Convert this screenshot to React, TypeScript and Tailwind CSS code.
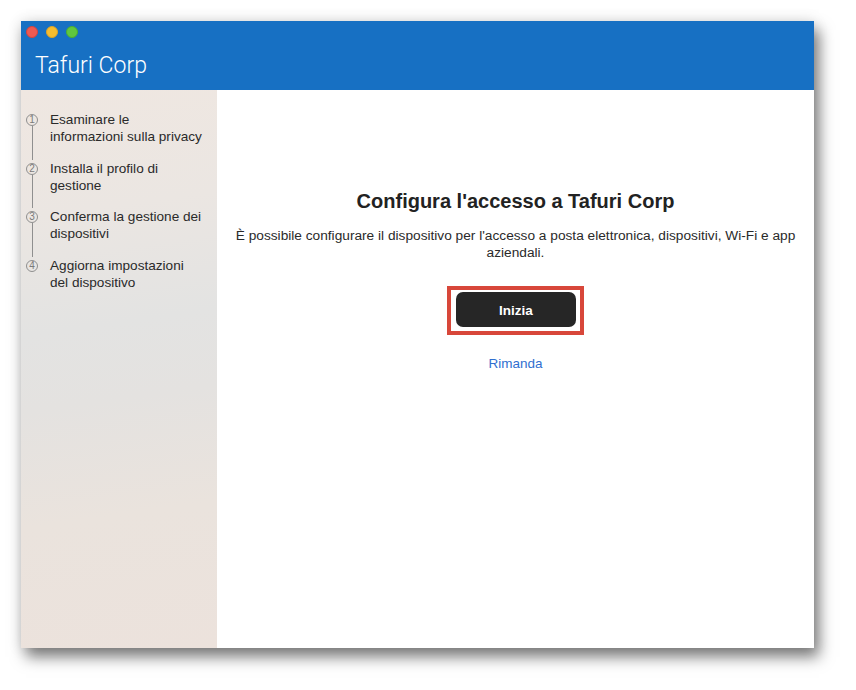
const steps = [
  ['Esaminare le', 'informazioni sulla privacy'],
  ['Installa il profilo di', 'gestione'],
  ['Conferma la gestione dei', 'dispositivi'],
  ['Aggiorna impostazioni', 'del dispositivo'],
]

export default function App() {
  return (
    <div className="w-[856px] h-[690px] bg-white pl-[21px] pt-[21px] font-['Liberation_Sans',Arial,sans-serif]">
      <div className="w-[793px] h-[627px] flex flex-col shadow-[5px_9px_14px_rgba(0,0,0,0.5),0_0_14px_rgba(0,0,0,0.12)]">
        {/* Title bar */}
        <div className="h-[69px] bg-[#1770c3] flex flex-col px-[5px] pt-[5px]">
          <div className="flex items-center gap-[8px]">
            <span className="w-[12px] h-[12px] rounded-full bg-[#ee5a52] border border-[#d6443d]" />
            <span className="w-[12px] h-[12px] rounded-full bg-[#f6bd2f] border border-[#dda426]" />
            <span className="w-[12px] h-[12px] rounded-full bg-[#5fc73f] border border-[#4bae2f]" />
          </div>
          <div className="pl-[9px] mt-[14px] font-['Roboto',sans-serif] font-light text-[23px] leading-[28px] text-white">
            Tafuri Corp
          </div>
        </div>

        <div className="flex flex-1">
          {/* Sidebar */}
          <div className="w-[196px] pt-[21px] pl-[5px] bg-[linear-gradient(172deg,#efe7e1_0%,#ebe6e2_22%,#e3e3e2_42%,#e4e2e0_55%,#eae3dd_75%,#ece2dc_100%)]">
            {steps.map(([a, b], i) => (
              <div key={i} className="flex gap-[12px]">
                <div className="flex flex-col items-center w-[12px] pt-[3px]">
                  <div className="w-[12px] h-[12px] rounded-full border border-[#8f8f8f] flex items-center justify-center text-[10px] leading-none text-[#7a7a7a]">
                    {i + 1}
                  </div>
                  {i < steps.length - 1 && <div className="flex-1 w-px bg-[#8f8f8f]" />}
                </div>
                <div className="text-[13.6px] leading-[17px] text-[#2a2a2a] pb-[14.5px]">
                  <div>{a}</div>
                  <div>{b}</div>
                </div>
              </div>
            ))}
          </div>

          {/* Main */}
          <div className="flex-1 bg-white flex flex-col items-center pt-[100px] px-[16px] text-center">
            <h1 className="text-[20px] leading-[23px] font-bold text-[#222]">
              Configura l'accesso a Tafuri Corp
            </h1>
            <p className="mt-[14px] text-[13.7px] leading-[17px] text-[#2a2a2a]">
              È possibile configurare il dispositivo per l'accesso a posta elettronica, dispositivi, Wi-Fi e app aziendali.
            </p>
            <div className="mt-[25px] border-[4px] border-[#d8473a] pt-[2px] pb-[4px] pl-[5px] pr-[4px]">
              <button className="w-[120px] h-[35px] rounded-[7px] bg-[#262626] text-white text-[13.5px] font-bold pt-[3px]">
                Inizia
              </button>
            </div>
            <a className="mt-[20px] text-[13.5px] leading-[17px] text-[#2f6fd0]">Rimanda</a>
          </div>
        </div>
      </div>
    </div>
  )
}
